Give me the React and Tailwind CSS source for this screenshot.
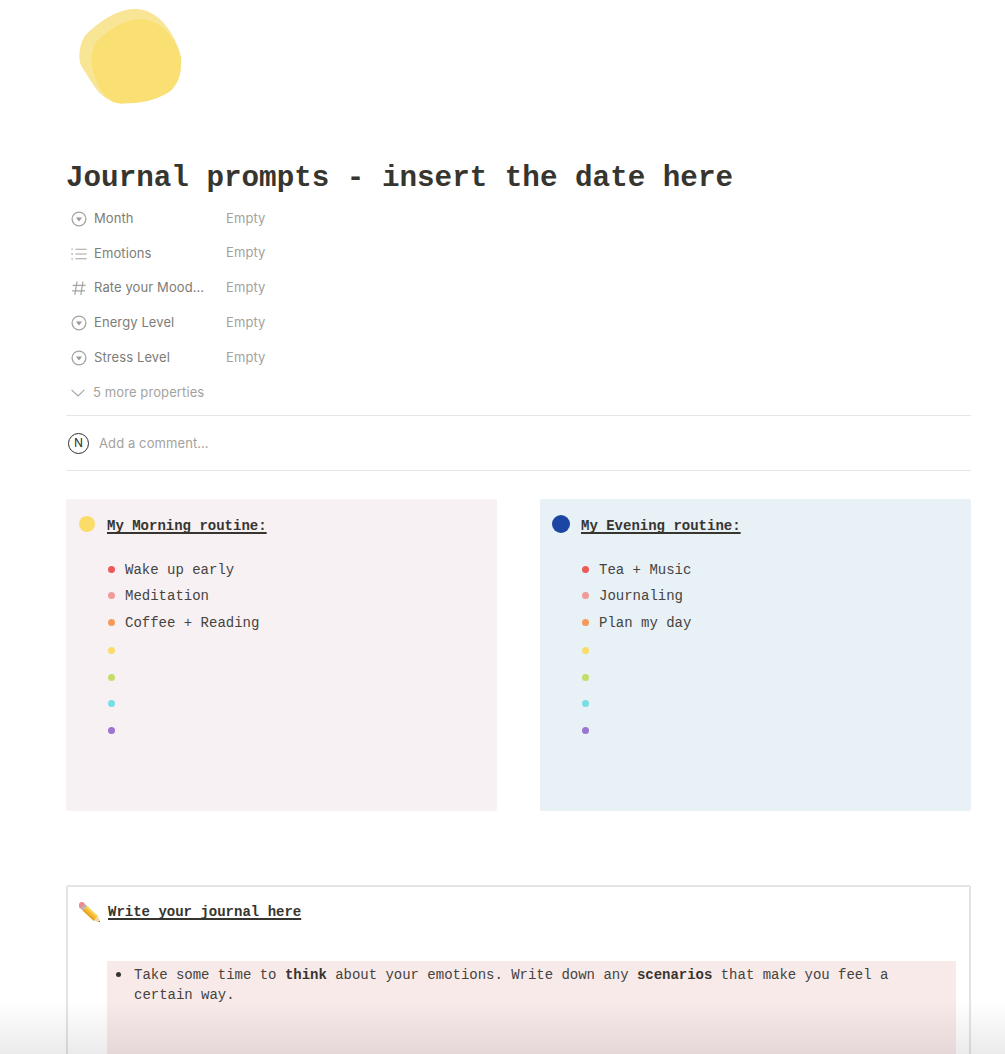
import React from "react";

const mono = "font-['Liberation_Mono',monospace]";
const sans = "font-['Inter',sans-serif]";

function SelectIcon() {
  return (
    <svg width="16" height="16" viewBox="0 0 16 16" fill="none" className="shrink-0">
      <circle cx="8" cy="8" r="6.9" stroke="#a3a3a0" strokeWidth="1.3" />
      <path d="M4.9 6.6h6.2L8 10.6z" fill="#9a9a97" />
    </svg>
  );
}
function ListIcon() {
  return (
    <svg width="16" height="16" viewBox="0 0 16 16" fill="none" className="shrink-0">
      <path d="M4.4 3.2H15.6M4.4 8H15.6M4.4 12.8H15.6" stroke="#a3a3a0" strokeWidth="1.1" />
      <path d="M.4 3.2h1.4M.4 8h1.4M.4 12.8h1.4" stroke="#a3a3a0" strokeWidth="1.3" />
    </svg>
  );
}
function HashIcon() {
  return (
    <svg width="16" height="16" viewBox="0 0 16 16" fill="none" className="shrink-0">
      <path d="M6 1.5 3.8 14.8M12 1.5 9.8 14.8M1.8 5.3h12.8M1.2 10.9h12.8" stroke="#a3a3a0" strokeWidth="1.2" />
    </svg>
  );
}
function Chevron() {
  return (
    <svg width="14" height="8" viewBox="0 0 14 8" fill="none" className="shrink-0">
      <path d="M.6.8 7 7l6.4-6.2" stroke="#a3a3a0" strokeWidth="1.1" />
    </svg>
  );
}
function Pencil() {
  return (
    <svg width="21" height="20" viewBox="0 0 21 20" className="shrink-0">
      <g transform="translate(3 3.6) rotate(43)">
        <path d="M-1 -3.2H1.5V3.2H-1C-2.6 3.2-3.4 2.4-3.4 1.4V-1.4C-3.4-2.4-2.6-3.2-1-3.2Z" fill="#ea8b8e" />
        <rect x="1.5" y="-3.2" width="2.4" height="6.4" fill="#a9b4bc" />
        <rect x="3.9" y="-3.2" width="15" height="6.4" fill="#f5b82e" />
        <rect x="3.9" y="-3.2" width="15" height="2" fill="#fbd65f" />
        <rect x="3.9" y="1.4" width="15" height="1.8" fill="#e6a021" />
        <path d="M18.9-3.2 25 0 18.9 3.2Z" fill="#f3d6a8" />
        <path d="M23.2-.9 25 0 23.2.9Z" fill="#444" />
      </g>
    </svg>
  );
}
function Blob() {
  return (
    <svg width="110" height="100" viewBox="78 18 330 300" className="block">
      <path d="M88 170C88 140 98 112 112 100C135 78 190 30 250 27C300 24 345 60 372 115C386 145 395 165 393 190C392 225 385 250 362 272C330 295 285 308 230 310C190 312 165 295 145 275C125 250 112 225 95 200C90 190 88 180 88 170Z" fill="#f9e596" />
      <path d="M125 185C124 160 130 135 142 122C165 100 215 58 272 57C325 58 365 105 382 140C390 160 395 175 393 190C392 225 385 250 362 272C330 295 285 308 230 310C215 311 200 310 187 305C165 285 150 270 140 245C130 225 126 205 125 185Z" fill="#fadf73" />
    </svg>
  );
}

const props = [
  { icon: <SelectIcon />, label: "Month", h: "h-[35px]", l: "" },
  { icon: <ListIcon />, label: "Emotions", h: "h-[34px]", l: "translate-y-px" },
  { icon: <HashIcon />, label: "Rate your Mood…", h: "h-[35px]", l: "" },
  { icon: <SelectIcon />, label: "Energy Level", h: "h-[35px]", l: "" },
  { icon: <SelectIcon />, label: "Stress Level", h: "h-[35px]", l: "" },
];

const dots = [
  { c: "bg-[#ec5b57]", h: "h-[27px]" },
  { c: "bg-[#f09a9c]", h: "h-[25px]" },
  { c: "bg-[#f59a5b]", h: "h-[28px]" },
  { c: "bg-[#fadc6b]", h: "h-[28px]" },
  { c: "bg-[#c6dc6a]", h: "h-[27px]" },
  { c: "bg-[#79dde6]", h: "h-[25px]" },
  { c: "bg-[#9b75cf]", h: "h-[29px]" },
];

function Card({ bg, dot, title, items }) {
  return (
    <div className={`w-[431px] h-[312px] rounded-[2px] ${bg} ${mono} text-[14px] text-[#45433e]`}>
      <div className="h-[52px] relative flex items-center">
        {dot}
        <span className="ml-[41px] mt-[2px] font-bold text-[#37352f] underline decoration-2 underline-offset-[2px] [text-decoration-skip-ink:none]">
          {title}
        </span>
      </div>
      <div className="pt-[5px] pl-[42px]">
        {dots.map((d, i) => (
          <div key={i} className={`flex items-center gap-[10px] ${d.h}`}>
            <span className={`w-[7px] h-[7px] rounded-full ${d.c}`} />
            <span className="mt-[2px]">{items[i]}</span>
          </div>
        ))}
      </div>
    </div>
  );
}

export default function App() {
  return (
    <div className="relative h-[1054px] overflow-hidden bg-white pl-[66px] pr-[34px]">
      <div className="h-[158px] pt-[6px] pl-[10px]">
        <Blob />
      </div>
      <h1 className={`${mono} h-[43px] leading-[41px] text-[29.25px] font-bold text-[#37352f]`}>
        Journal prompts - insert the date here
      </h1>

      <div className={`${sans} text-[13px] tracking-[0.1px] text-[#7d7c78]`}>
        {props.map((p) => (
          <div key={p.label} className={`flex items-center ${p.h}`}>
            <span className={`w-[28px] pl-[5px] ${p.l}`}>{p.icon}</span>
            <span className={`w-[132px] whitespace-nowrap ${p.l}`}>{p.label}</span>
            <span className="text-[#a3a29e]">Empty</span>
          </div>
        ))}
        <div className="flex items-center h-[35px] text-[#a3a29e]">
          <span className="w-[27px] pl-[5px]">
            <Chevron />
          </span>
          <span>5 more properties</span>
        </div>
      </div>

      <div className={`mt-[5px] h-[56px] border-y border-[#e6e6e4] flex items-center pl-[2px] ${sans} text-[13px] tracking-[0.1px] text-[#a3a29e]`}>
        <span className="w-[21px] h-[21px] rounded-full border-[1.5px] border-[#2f2f2d] flex items-center justify-center text-[12px] text-[#37352f]">
          N
        </span>
        <span className="ml-[10px] mt-[2px]">Add a comment…</span>
      </div>

      <div className="mt-[28px] flex gap-[43px]">
        <Card
          bg="bg-[#f7f1f4]"
          dot={<span className="absolute left-[13px] top-[17px] w-[16px] h-[16px] rounded-full bg-[#fbdc68]" />}
          title="My Morning routine:"
          items={["Wake up early", "Meditation", "Coffee + Reading", "", "", "", ""]}
        />
        <Card
          bg="bg-[#e8f1f6]"
          dot={<span className="absolute left-[12px] top-[16px] w-[18px] h-[18px] rounded-full bg-[#1c46a3]" />}
          title="My Evening routine:"
          items={["Tea + Music", "Journaling", "Plan my day", "", "", "", ""]}
        />
      </div>

      <div className={`mt-[74px] h-[300px] border-2 border-[#e4e4e2] rounded-[2px] ${mono} text-[14px] text-[#45433e]`}>
        <div className="h-[50px] flex items-center pl-[11px]">
          <Pencil />
          <span className="ml-[8px] font-bold text-[#37352f] underline decoration-2 underline-offset-[2px] [text-decoration-skip-ink:none]">
            Write your journal here
          </span>
        </div>
        <div className="mt-[24px] ml-[39px] mr-[13px] h-[200px] bg-[#f9eaea] pt-[4px] pl-[9px] pr-[20px] flex leading-[20px] tracking-[-0.02px]">
          <span className="w-[5px] h-[5px] mt-[7px] rounded-full bg-[#37352f] shrink-0" />
          <p className="ml-[13px]">
            Take some time to <b className="text-[#37352f]">think</b> about your emotions. Write down any <b className="text-[#37352f]">scenarios</b> that make you feel a certain way.
          </p>
        </div>
      </div>

      <div className="absolute left-0 right-0 bottom-0 h-[54px] bg-linear-to-b from-transparent to-black/8" />
    </div>
  );
}
